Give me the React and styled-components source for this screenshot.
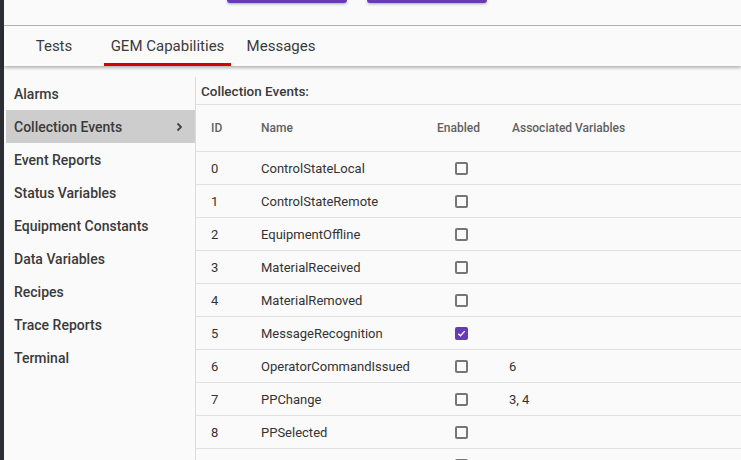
import React from "react";
import styled, { createGlobalStyle } from "styled-components";

const Global = createGlobalStyle`
  html, body { margin: 0; padding: 0; background: #fafafa; }
  body { font-family: Roboto, "Liberation Sans", sans-serif; color: #333; }
`;

const Frame = styled.div`
  display: flex;
  width: 741px;
  height: 460px;
  overflow: hidden;
`;

const DarkEdge = styled.div`
  width: 4px;
  background: #2b2e34;
  flex: none;
`;

const Main = styled.div`
  flex: 1;
  display: flex;
  flex-direction: column;
  background: #fafafa;
  min-width: 0;
`;

const TopBar = styled.div`
  height: 25px;
  flex: none;
  border-bottom: 1px solid #b4b4b4;
  display: flex;
  align-items: flex-start;
  gap: 20px;
  padding-left: 223px;
`;

const TopButton = styled.div`
  width: 120px;
  height: 3px;
  background: #673ab7;
  border-radius: 0 0 3px 3px;
  box-shadow: 0 1px 3px rgba(0, 0, 0, 0.35);
`;

const TabBar = styled.div`
  height: 40px;
  flex: none;
  display: flex;
  box-shadow: 0 2px 3px rgba(0, 0, 0, 0.28);
  position: relative;
  z-index: 1;
`;

const Tab = styled.div`
  width: ${(p) => p.$w}px;
  display: flex;
  align-items: center;
  justify-content: center;
  font-size: 15px;
  color: #3a3a3a;
  border-bottom: 3px solid ${(p) => (p.$active ? "#d50000" : "transparent")};
  padding-top: 3px;
  box-sizing: border-box;
`;

const Body = styled.div`
  flex: 1;
  display: flex;
  padding-top: 11px;
  min-height: 0;
`;

const Sidebar = styled.div`
  width: 189px;
  padding-left: 2px;
  border-right: 1px solid #dcdcdc;
  flex: none;
`;

const NavItem = styled.div`
  height: 33px;
  display: flex;
  align-items: center;
  justify-content: space-between;
  padding: 0 12px 0 8px;
  font-size: 14px;
  font-weight: 500;
  color: #3a3a3a;
  background: ${(p) => (p.$active ? "#cdcdcd" : "transparent")};
`;

const Content = styled.div`
  flex: 1;
  display: flex;
  flex-direction: column;
  min-height: 0;
`;

const Title = styled.div`
  height: 27px;
  flex: none;
  display: flex;
  align-items: center;
  padding-left: 5px;
  font-size: 13.5px;
  font-weight: 500;
  color: #3a3a3a;
  border-bottom: 1px solid #e0e0e0;
`;

const Row = styled.div`
  display: grid;
  grid-template-columns: 50px 176px 72px 1fr;
  align-items: center;
  height: ${(p) => (p.$head ? 46 : 32)}px;
  padding-left: 15px;
  border-bottom: 1px solid #e0e0e0;
  font-size: ${(p) => (p.$head ? 12 : 13)}px;
  font-weight: ${(p) => (p.$head ? 500 : 400)};
  color: ${(p) => (p.$head ? "#616161" : "#333")};
  flex: none;
`;

const HeadAssoc = styled.span`
  padding-left: 3px;
`;

const Box = styled.div`
  width: 13px;
  height: 13px;
  box-sizing: border-box;
  margin-left: 18px;
  border-radius: 2px;
  border: 2px solid ${(p) => (p.$checked ? "#673ab7" : "#767676")};
  background: ${(p) => (p.$checked ? "#673ab7" : "transparent")};
  display: flex;
  align-items: center;
  justify-content: center;
`;

const Check = () => (
  <svg width="11" height="11" viewBox="0 0 11 11">
    <path d="M1.5 5.8 L4.2 8.3 L9.5 2.6" fill="none" stroke="#fff" strokeWidth="1.6" />
  </svg>
);

const Chevron = () => (
  <svg width="7" height="10" viewBox="0 0 7 10">
    <path d="M1.5 1.5 L5 5 L1.5 8.5" fill="none" stroke="#444" strokeWidth="1.8" />
  </svg>
);

const nav = [
  "Alarms",
  "Collection Events",
  "Event Reports",
  "Status Variables",
  "Equipment Constants",
  "Data Variables",
  "Recipes",
  "Trace Reports",
  "Terminal",
];

const events = [
  [0, "ControlStateLocal", false, ""],
  [1, "ControlStateRemote", false, ""],
  [2, "EquipmentOffline", false, ""],
  [3, "MaterialReceived", false, ""],
  [4, "MaterialRemoved", false, ""],
  [5, "MessageRecognition", true, ""],
  [6, "OperatorCommandIssued", false, "6"],
  [7, "PPChange", false, "3, 4"],
  [8, "PPSelected", false, ""],
  [9, "", false, ""],
];

export default function App() {
  return (
    <>
      <Global />
      <Frame>
        <DarkEdge />
        <Main>
          <TopBar>
            <TopButton />
            <TopButton />
          </TopBar>
          <TabBar>
            <Tab $w={100}>Tests</Tab>
            <Tab $w={127} $active>GEM Capabilities</Tab>
            <Tab $w={100}>Messages</Tab>
          </TabBar>
          <Body>
            <Sidebar>
              {nav.map((n) => (
                <NavItem key={n} $active={n === "Collection Events"}>
                  {n}
                  {n === "Collection Events" && <Chevron />}
                </NavItem>
              ))}
            </Sidebar>
            <Content>
              <Title>Collection Events:</Title>
              <Row $head>
                <span>ID</span>
                <span>Name</span>
                <span>Enabled</span>
                <HeadAssoc>Associated Variables</HeadAssoc>
              </Row>
              {events.map(([id, name, on, vars]) => (
                <Row key={id}>
                  <span>{name ? id : ""}</span>
                  <span>{name}</span>
                  <Box $checked={on}>{on && <Check />}</Box>
                  <span>{vars}</span>
                </Row>
              ))}
            </Content>
          </Body>
        </Main>
      </Frame>
    </>
  );
}
